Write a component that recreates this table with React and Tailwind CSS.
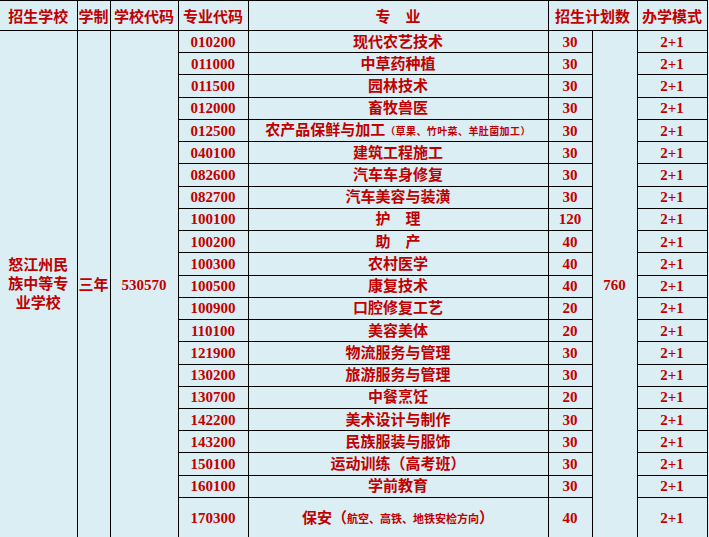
import React from "react";

const rows = [
  { code: "010200", name: "现代农艺技术", plan: "30" },
  { code: "011000", name: "中草药种植", plan: "30" },
  { code: "011500", name: "园林技术", plan: "30" },
  { code: "012000", name: "畜牧兽医", plan: "30" },
  { code: "012500", name: "农产品保鲜与加工", note: "（草果、竹叶菜、羊肚菌加工）", plan: "30" },
  { code: "040100", name: "建筑工程施工", plan: "30" },
  { code: "082600", name: "汽车车身修复", plan: "30" },
  { code: "082700", name: "汽车美容与装潢", plan: "30" },
  { code: "100100", name: "护　理", plan: "120" },
  { code: "100200", name: "助　产", plan: "40" },
  { code: "100300", name: "农村医学", plan: "40" },
  { code: "100500", name: "康复技术", plan: "40" },
  { code: "100900", name: "口腔修复工艺", plan: "20" },
  { code: "110100", name: "美容美体", plan: "20" },
  { code: "121900", name: "物流服务与管理", plan: "30" },
  { code: "130200", name: "旅游服务与管理", plan: "30" },
  { code: "130700", name: "中餐烹饪", plan: "20" },
  { code: "142200", name: "美术设计与制作", plan: "30" },
  { code: "143200", name: "民族服装与服饰", plan: "30" },
  { code: "150100", name: "运动训练（高考班）", plan: "30" },
  { code: "160100", name: "学前教育", plan: "30" },
];

const cell = "border border-black p-0 text-center align-middle";

export default function App() {
  return (
    <div className="h-[537px] w-[709px] overflow-hidden bg-[#daeef3]">
      <table
        className="w-[707px] table-fixed border-collapse border-l-0 text-[15px] font-bold leading-[18px] text-[#c00000]"
        style={{ fontFamily: '"Liberation Serif", "Noto Sans CJK SC", serif' }}
      >
        <colgroup>
          <col className="w-[77px]" />
          <col className="w-[33px]" />
          <col className="w-[68px]" />
          <col className="w-[70px]" />
          <col className="w-[300px]" />
          <col className="w-[44px]" />
          <col className="w-[45px]" />
          <col className="w-[70px]" />
        </colgroup>
        <thead>
          <tr className="h-[30px]">
            <th className={cell + " border-l-0 pt-[2px]"}>招生学校</th>
            <th className={cell + " pt-[2px]"}>学制</th>
            <th className={cell + " pt-[2px]"}>学校代码</th>
            <th className={cell + " pt-[2px]"}>专业代码</th>
            <th className={cell + " pt-[2px]"}>专　业</th>
            <th colSpan={2} className={cell + " pt-[2px]"}>招生计划数</th>
            <th className={cell + " pt-[2px]"}>办学模式</th>
          </tr>
        </thead>
        <tbody>
          {rows.map((r, i) => (
            <tr key={r.code} className="h-[22.24px]">
              {i === 0 && (
                <>
                  <td rowSpan={22} className={cell + " border-l-0 px-[1px]"}>
                    <div className="leading-[19px]">怒江州民<br />族中等专<br />业学校</div>
                  </td>
                  <td rowSpan={22} className={cell}>三年</td>
                  <td rowSpan={22} className={cell}>530570</td>
                </>
              )}
              <td className={cell}>{r.code}</td>
              <td className={cell + " whitespace-nowrap"}>
                {r.name}
                {r.note && <span className="text-[10px] tracking-[0.4px]">{r.note}</span>}
              </td>
              <td className={cell}>{r.plan}</td>
              {i === 0 && (
                <td rowSpan={22} className={cell}>760</td>
              )}
              <td className={cell}>2+1</td>
            </tr>
          ))}
          <tr className="h-[42px]">
            <td className={cell}>170300</td>
            <td className={cell + " whitespace-nowrap"}>
              保安（<span className="text-[11px]">航空、高铁、地铁安检方向</span>）
            </td>
            <td className={cell}>40</td>
            <td className={cell}>2+1</td>
          </tr>
        </tbody>
      </table>
    </div>
  );
}
